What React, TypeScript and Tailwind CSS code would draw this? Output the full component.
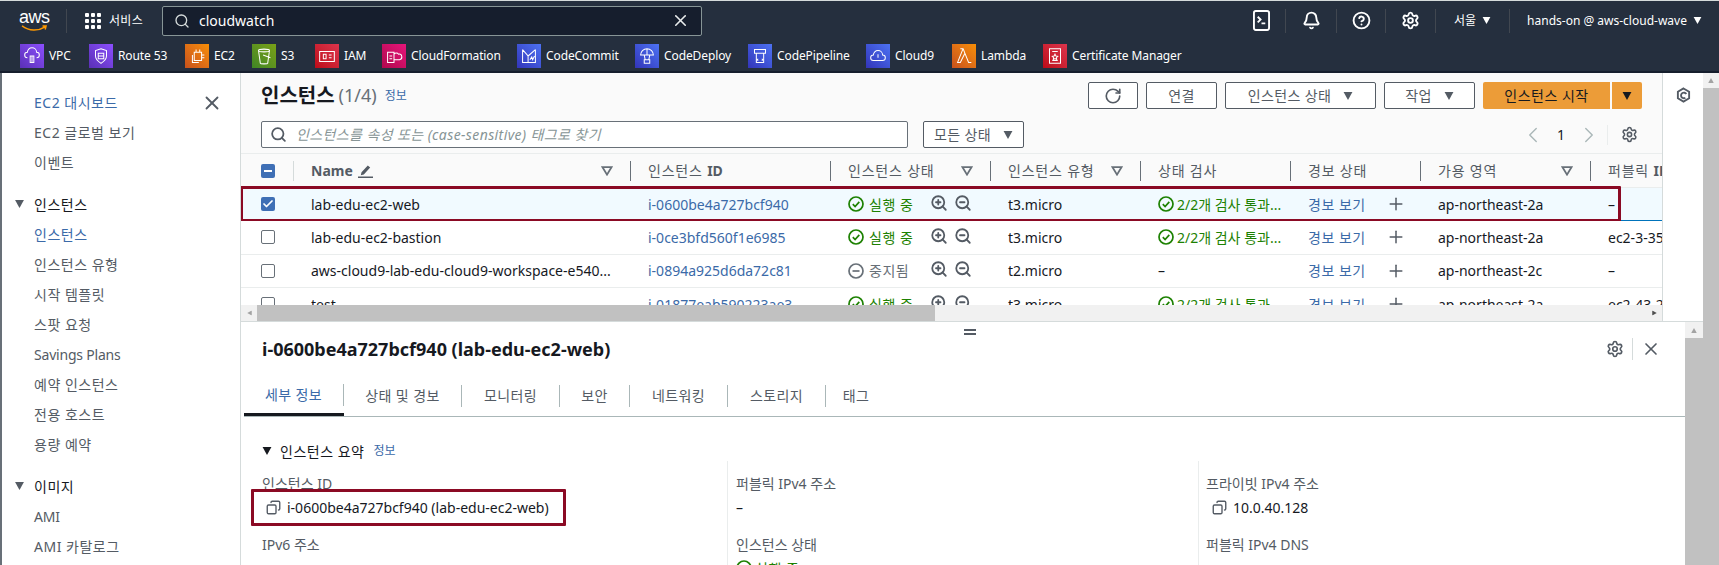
import React from 'react'
import { Search, X, Bell, CircleHelp, Settings, RotateCw, ChevronLeft, ChevronRight, Copy, ZoomIn, ZoomOut, Plus, Check } from 'lucide-react'

const Caret = ({ className = '' }: { className?: string }) => (
  <svg viewBox="0 0 10 9" className={className}><path d="M0 0h10L5 9z" fill="currentColor" /></svg>
)

const SortCaret = () => (
  <svg viewBox="0 0 12 10" className="w-[12px] h-[10px] text-[#687078]"><path d="M1.5 1.2h9L6 8.6z" fill="none" stroke="currentColor" strokeWidth="1.8" /></svg>
)

const CheckCircle = () => (
  <svg viewBox="0 0 16 16" className="w-4 h-4 text-[#1d8102] shrink-0" fill="none" stroke="currentColor" strokeWidth="1.7">
    <circle cx="8" cy="8" r="7" /><path d="M4.8 8.2l2.3 2.3 4.2-4.6" />
  </svg>
)

const MinusCircle = () => (
  <svg viewBox="0 0 16 16" className="w-4 h-4 text-[#687078] shrink-0" fill="none" stroke="currentColor" strokeWidth="1.7">
    <circle cx="8" cy="8" r="7" /><path d="M4.5 8h7" />
  </svg>
)

const services = [
  { name: 'VPC', color: 'from-[#5a30b5] to-[#8c4fff]', width: 'w-[69px]', d: 'M7 14a3 3 0 0 1 0-6 5 5 0 0 1 10 0 3 3 0 0 1 0 6M10 12h4v7h-4zM12 12v7' },
  { name: 'Route 53', color: 'from-[#5a30b5] to-[#8c4fff]', width: 'w-[96px]', d: 'M12 4l6 2v6c0 4-3 6-6 8-3-2-6-4-6-8V6zM9 9h6v6H9zM9 12h6' },
  { name: 'EC2', color: 'from-[#c8511b] to-[#f78e04]', width: 'w-[67px]', d: 'M9 8h8v9H9zM7 11v8h7M11 5v3M15 5v3M17 11h3M17 14h3' },
  { name: 'S3', color: 'from-[#3f8624] to-[#7aa116]', width: 'w-[63px]', d: 'M6 6c0-2 12-2 12 0l-2 14c0 1-8 1-8 0zM6 6c0 2 12 2 12 0M11 11l8 3' },
  { name: 'IAM', color: 'from-[#bd0816] to-[#dd344c]', width: 'w-[67px]', d: 'M4 7h16v11H4zM8 10h3v5H8zM14 11h3M14 14h3' },
  { name: 'CloudFormation', color: 'from-[#b0084d] to-[#e7157b]', width: 'w-[135px]', d: 'M5 8h7v11H5zM7 12h3M7 15h3M12 10a3 3 0 0 1 5 0 3 3 0 0 1 1 6h-6' },
  { name: 'CodeCommit', color: 'from-[#3334b9] to-[#4d72f3]', width: 'w-[118px]', d: 'M5 5l6 7v7M5 5v14h6M19 5l-8 7M19 5v14h-8M13 16l2-3 1 3 2-4' },
  { name: 'CodeDeploy', color: 'from-[#3334b9] to-[#4d72f3]', width: 'w-[113px]', d: 'M12 4a7 7 0 0 1 7 7H5a7 7 0 0 1 7-7zM12 4v7M9 11l1 5M15 11l-1 5M9 16h6v4H9z' },
  { name: 'CodePipeline', color: 'from-[#3334b9] to-[#4d72f3]', width: 'w-[118px]', d: 'M6 5h12v4H6zM8 9v10h8V9M10 15l-1 1 1 1M14 15l1 1-1 1' },
  { name: 'Cloud9', color: 'from-[#3334b9] to-[#4d72f3]', width: 'w-[86px]', d: 'M7 17a3 3 0 0 1 0-6 5 5 0 0 1 10 0 3 3 0 0 1 0 6zM12 10v4' },
  { name: 'Lambda', color: 'from-[#c8511b] to-[#f78e04]', width: 'w-[91px]', d: 'M8 4h3l6 15h3M11 4l-6 15h3l5-10' },
  { name: 'Certificate Manager', color: 'from-[#bd0816] to-[#dd344c]', width: 'w-[140px]', d: 'M6 4h12v16H6zM9 7h6M12 10l1 2 2 .3-1.5 1.5.4 2-1.9-1-1.900 1 .4-2L9 12.300l2-.3zM9 17h6' },
]

const columns = [
  { label: '', bold: 'Name', width: 'w-[337px]', sort: true, pencil: true },
  { label: '인스턴스 ', bold: 'ID', width: 'w-[200px]' },
  { label: '인스턴스 상태', width: 'w-[160px]', sort: true },
  { label: '인스턴스 유형', width: 'w-[150px]', sort: true },
  { label: '상태 검사', width: 'w-[150px]' },
  { label: '경보 상태', width: 'w-[130px]' },
  { label: '가용 영역', width: 'w-[170px]', sort: true },
  { label: '퍼블릭 ', bold: 'IPv4 DNS', width: 'w-[200px]' },
]

const rows = [
  { name: 'lab-edu-ec2-web', id: 'i-0600be4a727bcf940', running: true, type: 't3.micro', az: 'ap-northeast-2a', dns: '–', selected: true },
  { name: 'lab-edu-ec2-bastion', id: 'i-0ce3bfd560f1e6985', running: true, type: 't3.micro', az: 'ap-northeast-2a', dns: 'ec2-3-35-100-24' },
  { name: 'aws-cloud9-lab-edu-cloud9-workspace-e540...', id: 'i-0894a925d6da72c81', running: false, type: 't2.micro', az: 'ap-northeast-2c', dns: '–' },
  { name: 'test', id: 'i-01877eab590223ae3', running: true, type: 't3.micro', az: 'ap-northeast-2a', dns: 'ec2-43-201-1-5' },
]

const tabs = [
  { label: '세부 정보', width: 'w-[100px]', active: true },
  { label: '상태 및 경보', width: 'w-[118px]' },
  { label: '모니터링', width: 'w-[98px]' },
  { label: '보안', width: 'w-[70px]' },
  { label: '네트워킹', width: 'w-[98px]' },
  { label: '스토리지', width: 'w-[98px]' },
  { label: '태그', width: 'w-[60px]' },
]

const NavLink = ({ children, active, latin }: { children: React.ReactNode; active?: boolean; latin?: boolean }) => (
  <div className={`h-[30px] flex items-center pl-[32px] text-[14px] ${latin ? 'tracking-[-0.2px]' : 'tracking-[0.5px]'} ${active ? 'text-[#3b6aa8]' : 'text-[#545b64]'}`}>{children}</div>
)

const NavSection = ({ label, className }: { label: string; className: string }) => (
  <div className={`h-[30px] flex items-center pl-[13px] text-[14px] tracking-[0.5px] text-[#16191f] ${className}`}>
    <Caret className="w-[9px] h-[8px] mr-[10px] text-[#545b64]" />
    {label}
  </div>
)

const Button = ({ children, className }: { children: React.ReactNode; className: string }) => (
  <button className={`h-[27px] flex items-center justify-center gap-[12px] border border-[#545b64] rounded-[2px] bg-white text-[14px] tracking-[0.4px] text-[#545b64] ${className}`}>{children}</button>
)

const Field = ({ label, children, className = '' }: { label: string; children?: React.ReactNode; className?: string }) => (
  <div className={`h-[61px] ${className}`}>
    <div className="h-[20px] leading-[20px] text-[14px] text-[#545b64]">{label}</div>
    <div className="h-[24px] mt-[1px] flex items-center text-[14px] text-[#16191f]">{children}</div>
  </div>
)

export default function App() {
  return (
    <div className="w-[1719px] h-[565px] overflow-hidden flex flex-col bg-white font-['Noto_Sans','Noto_Sans_CJK_KR',sans-serif]">
      <header className="h-[73px] shrink-0 bg-[#252f3e] border-t border-t-[#d5dbdb] border-b-2 border-b-[#161e2d] text-white">
        <div className="h-[39px] flex items-center">
          <div className="w-[67px] pl-[19px] h-[24px] relative border-r border-[#414750]">
            <span className="block text-[18px] leading-[18px] -mt-[1px] tracking-[-0.5px] font-['Liberation_Sans',sans-serif]">aws</span>
            <svg viewBox="0 0 30 9" className="absolute left-[19px] top-[16px] w-[31px] h-[8px]" fill="none"><path d="M1 1c8 6 18 6 26 1M24 1h4l-1 4" stroke="#ff9900" strokeWidth="1.700" /></svg>
          </div>
          <div className="ml-[18px] w-[16px] h-[16px] grid grid-cols-3 gap-[2px]">
            {Array.from({ length: 9 }).map((_, i) => <span key={i} className="bg-white rounded-[1px]" />)}
          </div>
          <span className="ml-[8px] w-[53px] text-[12px] tracking-[0.3px]">서비스</span>
          <div className="w-[540px] h-[30px] flex items-center border border-[#879596] rounded-[2px] bg-[#161e2d] text-[14px] px-[11px]">
            <Search size={16} strokeWidth={2} className="text-[#d5dbdb]" />
            <span className="ml-[9px] flex-1">cloudwatch</span>
            <X size={19} strokeWidth={2} className="text-[#eaeded]" />
          </div>
          <div className="flex-1 flex items-center justify-end h-[24px] text-[12px]">
            <div className="w-[49px] h-full flex items-center justify-center border-r border-[#414750]">
              <svg viewBox="0 0 18 22" className="w-[17px] h-[21px]" fill="none" stroke="white" strokeWidth="2"><rect x="1" y="1" width="16" height="20" rx="2" /><path d="M5 7l3 3-3 3M9 14h4" /></svg>
            </div>
            <div className="w-[51px] h-full flex items-center justify-center border-r border-[#414750]"><Bell size={19} strokeWidth={2.4} /></div>
            <div className="w-[49px] h-full flex items-center justify-center border-r border-[#414750]"><CircleHelp size={19} strokeWidth={2.4} /></div>
            <div className="w-[50px] h-full flex items-center justify-center border-r border-[#414750]"><Settings size={19} strokeWidth={2.4} /></div>
            <div className="w-[74px] h-full flex items-center justify-center gap-[6px] border-r border-[#414750]">서울 <Caret className="w-[9px] h-[7px]" /></div>
            <div className="w-[209px] h-full flex items-center justify-center gap-[6px]">hands-on @ aws-cloud-wave <Caret className="w-[9px] h-[7px]" /></div>
          </div>
        </div>
        <div className="h-[31px] flex items-center pl-[20px]">
          {services.map((s) => (
            <div key={s.name} className={`flex items-center gap-[5px] text-[12px] tracking-[-0.1px] ${s.width}`}>
              <div className={`w-[24px] h-[24px] flex items-center justify-center bg-linear-to-tr ${s.color}`}>
                <svg viewBox="0 0 24 24" className="w-[22px] h-[22px]" fill="none" stroke="white" strokeWidth="1.100"><path d={s.d} /></svg>
              </div>
              <span className="whitespace-nowrap">{s.name}</span>
            </div>
          ))}
        </div>
      </header>

      <div className="flex-1 min-h-0 flex">
        <aside className="w-[241px] shrink-0 relative border-l-2 border-l-[#687078] border-r border-r-[#d5dbdb] pt-[14px]">
          <X size={22} strokeWidth={2} className="absolute left-[199px] top-[19px] text-[#545b64]" />
          <NavLink active>EC2 대시보드</NavLink>
          <NavLink>EC2 글로벌 보기</NavLink>
          <NavLink>이벤트</NavLink>
          <NavSection label="인스턴스" className="mt-[12px]" />
          <NavLink active>인스턴스</NavLink>
          <NavLink>인스턴스 유형</NavLink>
          <NavLink>시작 템플릿</NavLink>
          <NavLink>스팟 요청</NavLink>
          <NavLink latin>Savings Plans</NavLink>
          <NavLink>예약 인스턴스</NavLink>
          <NavLink>전용 호스트</NavLink>
          <NavLink>용량 예약</NavLink>
          <NavSection label="이미지" className="mt-[12px]" />
          <NavLink latin>AMI</NavLink>
          <NavLink>AMI 카탈로그</NavLink>
        </aside>

        <main className="w-[1462px] shrink-0 flex flex-col">
          <div className="h-[248px] flex">
            <section className="w-[1421px] shrink-0 flex flex-col bg-[#fafafa] overflow-hidden">
              <div className="h-[81px] shrink-0 pl-[20px] pr-[20px] pt-[9px] border-b border-[#eaeded]">
                <div className="flex items-center h-[27px]">
                  <h1 className="text-[20px] font-bold text-[#16191f]">인스턴스</h1>
                  <span className="ml-[4px] text-[18px] text-[#687078]">(1/4)</span>
                  <span className="ml-[8px] text-[12px] text-[#3b6aa8]">정보</span>
                  <div className="ml-auto flex gap-[8px]">
                    <Button className="w-[50px]"><RotateCw size={18} strokeWidth={2.2} /></Button>
                    <Button className="w-[71px]">연결</Button>
                    <Button className="w-[151px]">인스턴스 상태 <Caret className="w-[10px] h-[8px]" /></Button>
                    <Button className="w-[91px]">작업 <Caret className="w-[10px] h-[8px]" /></Button>
                    <div className="flex gap-[2px]">
                      <button className="w-[127px] h-[27px] rounded-l-[2px] bg-[#ec9c38] text-[14px] tracking-[0.5px] text-[#16191f]">인스턴스 시작</button>
                      <button className="w-[30px] h-[27px] flex items-center justify-center rounded-r-[2px] bg-[#ec9c38] text-[#16191f]"><Caret className="w-[10px] h-[8px]" /></button>
                    </div>
                  </div>
                </div>
                <div className="flex items-center h-[27px] mt-[12px]">
                  <div className="w-[647px] h-full flex items-center px-[8px] border border-[#687078] rounded-[2px] bg-white">
                    <Search size={17} strokeWidth={2.500} className="text-[#545b64]" />
                    <span className="ml-[9px] text-[14px] italic tracking-[0.4px] text-[#879596]">인스턴스를 속성 또는 (case-sensitive) 태그로 찾기</span>
                  </div>
                  <Button className="ml-[15px] w-[101px]">모든 상태 <Caret className="w-[10px] h-[8px]" /></Button>
                  <div className="ml-auto mr-[4px] flex items-center text-[14px] text-[#16191f]">
                    <ChevronLeft size={26} strokeWidth={1.300} className="text-[#aab7b8]" />
                    <span className="w-[30px] text-center">1</span>
                    <ChevronRight size={26} strokeWidth={1.300} className="text-[#aab7b8]" />
                    <div className="h-[20px] w-px bg-[#eaeded] ml-[5px]" />
                    <Settings size={17} strokeWidth={2.200} className="ml-[13px] text-[#545b64]" />
                  </div>
                </div>
              </div>

              <div className="flex-1 min-h-0 overflow-hidden text-[14px]">
                <div className="h-[34px] flex items-center border-b border-[#eaeded] text-[#545b64]">
                  <div className="w-[53px] shrink-0 h-[20px] pl-[20px] flex items-center border-r border-[#d5dbdb]">
                    <span className="w-[14px] h-[14px] rounded-[2px] bg-[#3f6fb5] flex items-center justify-center"><span className="w-[8px] h-[2px] bg-white" /></span>
                  </div>
                  {columns.map((c, i) => (
                    <div key={c.width + c.label} className={`shrink-0 h-[20px] pl-[17px] pr-[17px] flex items-center justify-between whitespace-nowrap ${c.width} ${i < columns.length - 1 ? 'border-r border-[#687078]' : ''}`}>
                      <span className="flex items-center gap-[5px]">
                        <span className="whitespace-pre tracking-[0.8px]">{c.label}<b className="tracking-normal">{c.bold}</b></span>
                        {c.pencil && (
                          <svg viewBox="0 0 15 14" className="w-[15px] h-[14px]" fill="#545b64"><path d="M9.800 1.500l2.400 2.100-6.400 6.800-3 .9.700-3zM0 12.500h15V14H0z" /></svg>
                        )}
                      </span>
                      {c.sort && <SortCaret />}
                    </div>
                  ))}
                </div>
                {rows.map((r) => (
                  <div key={r.id} className={`relative h-[33.33px] flex items-center border-b whitespace-nowrap text-[#16191f] ${r.selected ? 'bg-[#f1faff] border-[#0073bb]' : 'bg-white border-[#eaeded]'}`}>
                    <div className="w-[53px] shrink-0 pl-[20px] flex items-center">
                      {r.selected ? (
                        <span className="w-[14px] h-[14px] rounded-[2px] bg-[#3f6fb5] flex items-center justify-center"><Check size={12} strokeWidth={3.500} className="text-white" /></span>
                      ) : (
                        <span className="w-[14px] h-[14px] rounded-[2px] border border-[#687078] bg-white" />
                      )}
                    </div>
                    <div className="w-[337px] shrink-0 pl-[17px]">{r.name}</div>
                    <div className="w-[200px] shrink-0 pl-[17px] text-[#3b6aa8]">{r.id}</div>
                    <div className="w-[160px] shrink-0 pl-[17px] flex items-center">
                      {r.running ? <CheckCircle /> : <MinusCircle />}
                      <span className={`ml-[5px] w-[61px] tracking-[0.5px] ${r.running ? 'text-[#1d8102]' : 'text-[#687078]'}`}>{r.running ? '실행 중' : '중지됨'}</span>
                      <ZoomIn size={18} strokeWidth={2.4} className="text-[#545b64] -mt-[3px]" />
                      <ZoomOut size={18} strokeWidth={2.4} className="ml-[6px] text-[#545b64] -mt-[3px]" />
                    </div>
                    <div className="w-[150px] shrink-0 pl-[17px]">{r.type}</div>
                    <div className="w-[150px] shrink-0 pl-[17px] flex items-center">
                      {r.running ? <><CheckCircle /><span className="ml-[3px] w-[112px] truncate text-[#1d8102]">2/2개 검사 통과...</span></> : '–'}
                    </div>
                    <div className="w-[130px] shrink-0 pl-[17px] flex items-center text-[#3b6aa8]">
                      <span className="w-[68px] tracking-[0.5px]">경보 보기</span>
                      <Plus size={20} strokeWidth={1.800} className="ml-[10px] text-[#545b64]" />
                    </div>
                    <div className="w-[170px] shrink-0 pl-[17px]">{r.az}</div>
                    <div className="w-[200px] shrink-0 pl-[17px]">{r.dns}</div>
                    {r.selected && <div className="absolute left-[-1px] top-[-2px] w-[1381px] h-[36px] border-[3px] border-[#8b0a24] rounded-[1px] pointer-events-none" />}
                  </div>
                ))}
              </div>

              <div className="h-[16px] shrink-0 flex items-center bg-[#f1f1f1] relative">
                <span className="w-[16px] flex justify-center"><Caret className="w-[5px] h-[8px] rotate-90 text-[#a3a3a3]" /></span>
                <div className="w-[678px] h-full bg-[#c1c1c1]" />
                <span className="ml-auto w-[16px] flex justify-center"><Caret className="w-[5px] h-[8px] -rotate-90 text-[#505050]" /></span>
              </div>
            </section>
            <div className="w-[41px] shrink-0 border-l border-[#d5dbdb] flex justify-center pt-[14px]">
              <svg viewBox="0 0 16 16" className="w-[15px] h-[16px]" fill="none" stroke="#545b64" strokeWidth="2"><path d="M8 1l6 3.500v7L8 15l-6-3.500v-7z" /><path d="M11 7a3 3 0 1 0-1 4" /></svg>
            </div>
          </div>

          <section className="flex-1 min-h-0 flex border-t border-[#d5dbdb]">
            <div className="w-[1444px] shrink-0 relative overflow-hidden">
              <div className="absolute left-[723px] top-[7px] w-[12px] h-[6px] border-y-2 border-[#545b64]" />
              <div className="h-[54px] pl-[21px] pr-[24px] flex items-center justify-between">
                <h2 className="text-[18px] font-bold text-[#16191f]">i-0600be4a727bcf940 (lab-edu-ec2-web)</h2>
                <div className="flex items-center text-[#545b64]">
                  <Settings size={18} strokeWidth={2.2} />
                  <div className="h-[22px] w-px bg-[#d5dbdb] mx-[8px]" />
                  <X size={20} strokeWidth={2} />
                </div>
              </div>
              <div className="h-[41px] ml-[3px] flex items-start text-[14px] tracking-[0.4px] text-[#545b64] border-b border-[#aab7b8]">
                {tabs.map((t, i) => (
                  <div key={t.label} className={`relative h-[40px] flex items-center justify-center ${t.width} ${t.active ? 'text-[#3b6aa8] border-b-[3px] border-[#16191f]' : ''}`}>
                    <span className={i < tabs.length - 1 ? 'w-full text-center border-r border-[#aab7b8] leading-[22px]' : 'w-full text-center leading-[22px]'}>{t.label}</span>
                  </div>
                ))}
              </div>
              <div className="pt-[24px] pl-[21px]">
                <div className="h-[20px] flex items-center text-[14px] text-[#16191f]">
                  <Caret className="w-[10px] h-[8px] mr-[8px]" />
                  <span className="tracking-[0.5px]">인스턴스 요약</span>
                  <span className="ml-[9px] text-[12px] text-[#3b6aa8]">정보</span>
                </div>
                <div className="flex">
                  <div className="w-[465px] shrink-0 pt-[13px]">
                    <Field label="인스턴스 ID">
                      <Copy size={15} strokeWidth={2.2} className="ml-[4px] mr-[6px] -scale-x-100 text-[#545b64]" />
                      <span>i-0600be4a727bcf940 (lab-edu-ec2-web)</span>
                    </Field>
                    <Field label="IPv6 주소" />
                  </div>
                  <div className="w-[471px] shrink-0 pl-[8px] pt-[13px] border-l border-[#eaeded]">
                    <Field label="퍼블릭 IPv4 주소">–</Field>
                    <Field label="인스턴스 상태">
                      <CheckCircle />
                      <span className="ml-[3px] tracking-[0.5px] text-[#1d8102]">실행 중</span>
                    </Field>
                  </div>
                  <div className="flex-1 pl-[7px] pt-[13px] border-l border-[#eaeded]">
                    <Field label="프라이빗 IPv4 주소">
                      <Copy size={15} strokeWidth={2.2} className="ml-[6px] mr-[6px] -scale-x-100 text-[#545b64]" />
                      10.0.40.128
                    </Field>
                    <Field label="퍼블릭 IPv4 DNS" />
                  </div>
                </div>
              </div>
              <div className="absolute left-[10px] top-[167px] w-[315px] h-[37px] border-[3px] border-[#8b0a24] rounded-[1px]" />
            </div>
            <div className="w-[18px] shrink-0 bg-[#f1f1f1] flex flex-col items-center">
              <span className="h-[16px] flex items-center"><Caret className="w-[8px] h-[5px] rotate-180 text-[#a3a3a3]" /></span>
              <div className="flex-1 w-full bg-[#c1c1c1]" />
            </div>
          </section>
        </main>

        <div className="w-[16px] shrink-0 bg-[#f1f1f1] flex flex-col items-center">
          <span className="h-[15px] flex items-center"><Caret className="w-[8px] h-[5px] rotate-180 text-[#a3a3a3]" /></span>
          <div className="flex-1 w-full bg-[#c1c1c1]" />
        </div>
      </div>
    </div>
  )
}
